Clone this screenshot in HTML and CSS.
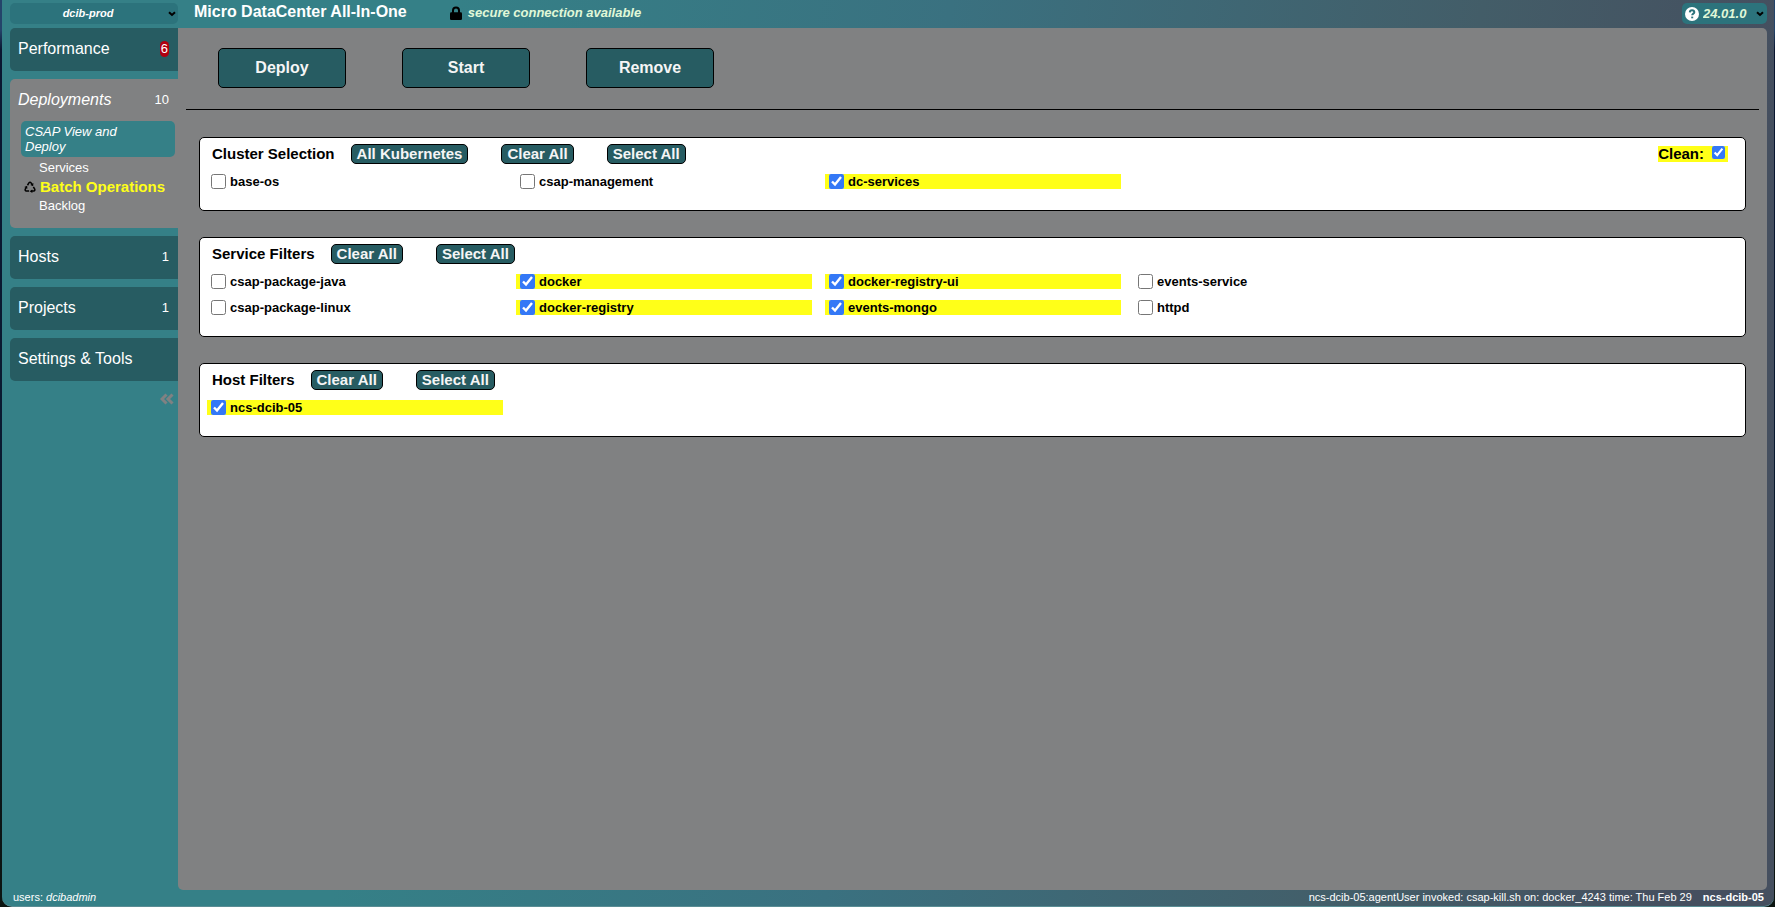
FILE: index.html
```html
<!DOCTYPE html>
<html lang="en">
<head>
<meta charset="utf-8">
<title>CSAP Batch Operations</title>
<link rel="stylesheet" href="styles.css">
</head>
<body>
<div class="app">
  <div class="workspace">
    <nav class="sidebar" aria-label="Main">
      <div class="picker picker-project">
        <select aria-label="Project"><option>dcib-prod</option></select>
        <svg class="chevron" viewBox="0 0 8 6"><path d="M1 1.2 4 4 7 1.2"/></svg>
      </div>
      <div class="tabs">
        <button class="tab" type="button">Performance <span class="count alert">6</span></button>
        <section class="tab-open">
          <button class="tab tab-active" type="button">Deployments <span class="count">10</span></button>
          <div class="submenu">
            <h2 class="submenu-title">CSAP View and Deploy</h2>
            <a class="sublink" href="#services">Services</a>
            <a class="sublink current" href="#batch">
              <svg class="recycle" viewBox="0 0 24 24"><g id="arm"><path d="M7 8.5 9.8 3.8Q12 1 14.2 3.8L16 6.8"/><path class="tip" d="M18.8 4 18.4 10.5 12.7 7.8z"/></g><use href="#arm" transform="rotate(120 12 13.4)"/><use href="#arm" transform="rotate(240 12 13.4)"/></svg>
              Batch Operations</a>
            <a class="sublink" href="#backlog">Backlog</a>
          </div>
        </section>
        <button class="tab" type="button">Hosts <span class="count">1</span></button>
        <button class="tab" type="button">Projects <span class="count">1</span></button>
        <button class="tab" type="button">Settings &amp; Tools</button>
      </div>
      <button class="collapse" type="button" aria-label="Collapse menu">
        <svg viewBox="0 0 14 12"><path d="M6.5 1.5 2 6l4.500 4.500M12.500 1.500 8 6l4.500 4.500"/></svg>
      </button>
    </nav>
    <div class="content">
      <header class="topbar">
        <h1>Micro DataCenter All-In-One</h1>
        <p class="secure">
          <svg class="lock" viewBox="0 0 12 14"><path d="M3 7V4.500a3 3 0 0 1 6 0V7"/><rect x="0" y="6.300" width="12" height="7.700" rx="1.300"/></svg>
          secure connection available
        </p>
        <div class="picker picker-version">
          <svg class="help" viewBox="0 0 14 14"><circle cx="7" cy="7" r="7"/><path d="M4.800 5.400C4.900 3.900 5.900 3.300 7 3.300c1.300 0 2.300.8 2.300 1.900C9.300 6.700 7.200 6.600 7.200 8.300"/><path d="M7.200 9.600v1.700"/></svg>
          <select aria-label="Version"><option>24.01.0</option></select>
          <svg class="chevron" viewBox="0 0 8 6"><path d="M1 1.200 4 4 7 1.200"/></svg>
        </div>
      </header>
      <main class="panel">
        <div class="actions">
          <button type="button">Deploy</button>
          <button type="button">Start</button>
          <button type="button">Remove</button>
        </div>
        <div class="cards">
          <section class="card">
            <div class="card-head">
              <h2>Cluster Selection</h2>
              <div class="card-buttons">
                <button type="button">All Kubernetes</button>
                <button type="button">Clear All</button>
                <button type="button">Select All</button>
              </div>
              <label class="clean">Clean: <input type="checkbox" checked></label>
            </div>
            <div class="options">
              <label><input type="checkbox">base-os</label>
              <label><input type="checkbox">csap-management</label>
              <label><input type="checkbox" checked>dc-services</label>
            </div>
          </section>
          <section class="card">
            <div class="card-head">
              <h2>Service Filters</h2>
              <div class="card-buttons">
                <button type="button">Clear All</button>
                <button type="button">Select All</button>
              </div>
            </div>
            <div class="options">
              <label><input type="checkbox">csap-package-java</label>
              <label><input type="checkbox" checked>docker</label>
              <label><input type="checkbox" checked>docker-registry-ui</label>
              <label><input type="checkbox">events-service</label>
              <label><input type="checkbox">csap-package-linux</label>
              <label><input type="checkbox" checked>docker-registry</label>
              <label><input type="checkbox" checked>events-mongo</label>
              <label><input type="checkbox">httpd</label>
            </div>
          </section>
          <section class="card">
            <div class="card-head">
              <h2>Host Filters</h2>
              <div class="card-buttons">
                <button type="button">Clear All</button>
                <button type="button">Select All</button>
              </div>
            </div>
            <div class="options">
              <label><input type="checkbox" checked>ncs-dcib-05</label>
            </div>
          </section>
        </div>
      </main>
    </div>
  </div>
  <footer class="status">
    <span>users: <em>dcibadmin</em></span>
    <span class="event">ncs-dcib-05:agentUser invoked: csap-kill.sh on: docker_4243 time: Thu Feb 29</span>
    <strong>ncs-dcib-05</strong>
  </footer>
</div>
</body>
</html>
```
FILE: styles.css
```css
* {
  box-sizing: border-box;
}

body {
  margin: 0;
  padding: 0 1px 0 2px;
  background: linear-gradient(#24446a 0, #24446a 30px, #0a1630 50px, #0a1a30 50%, #0c1410);
  font-family: "Liberation Sans", Arial, sans-serif;
  color: #fff;
}

h1,
h2,
p {
  margin: 0;
}

button,
select,
input {
  font: inherit;
  color: inherit;
  margin: 0;
}

button {
  border: 0;
  padding: 0;
}

.app {
  display: flex;
  flex-direction: column;
  min-height: 100vh;
  padding: 0 7px 0 8px;
  border-radius: 0 0 10px 10px;
  border-bottom: 1px solid #5a8d94;
  background: linear-gradient(98deg, #358087 24%, #3a7180 50%, #435d68 78%, #454f5f 94%);
}

.workspace {
  flex: 1;
  display: flex;
}

.sidebar {
  flex: none;
  width: 168px;
  padding-top: 3px;
}

.content {
  flex: 1;
  min-width: 0;
  display: flex;
  flex-direction: column;
}

.picker {
  position: relative;
  height: 21px;
  border-radius: 5px;
  background: #2c737c;
  font-weight: bold;
  font-style: italic;
}

.picker select {
  appearance: none;
  width: 100%;
  height: 100%;
  border: 0;
  background: none;
}

.picker-project {
  margin-bottom: 4px;
}

.picker-project select {
  padding: 0 12px 2px 0;
  font-size: 11px;
  text-align: center;
  text-align-last: center;
}

.picker-version {
  width: 85px;
  margin-left: auto;
  color: #e0f8d8;
}

.picker-version select {
  padding: 0 0 1px 21px;
  font-size: 13px;
}

.chevron {
  position: absolute;
  right: 2px;
  top: 8px;
  width: 8px;
  height: 6px;
  fill: none;
  stroke: #000;
  stroke-width: 2;
}

.picker-version .chevron {
  right: 3px;
}

.help {
  position: absolute;
  left: 3px;
  top: 4px;
  width: 14px;
  height: 14px;
  fill: #fff;
}

.help path {
  fill: none;
  stroke: #2c737c;
  stroke-width: 2;
}

.tabs {
  display: flex;
  flex-direction: column;
  gap: 8px;
}

.tab {
  display: flex;
  align-items: center;
  justify-content: space-between;
  width: 100%;
  height: 43px;
  padding: 0 9px 2px 8px;
  border-radius: 5px 0 0 5px;
  background: #275c62;
  font-size: 16px;
}

.count {
  font-size: 13px;
  font-style: normal;
  line-height: 16px;
}

.alert {
  padding: 0 1px;
  border-radius: 5px;
  background: #b00010;
}

.tab-open {
  padding-bottom: 13px;
  border-radius: 5px 0 0 5px;
  background: #808182;
}

.tab-active {
  height: 42px;
  padding-bottom: 0;
  background: none;
  font-style: italic;
}

.submenu {
  padding: 0 3px 0 11px;
}

.submenu-title {
  margin-bottom: 1px;
  padding: 3px 32px 3px 4px;
  border-radius: 5px;
  background: #358087;
  font-size: 13px;
  font-weight: normal;
  font-style: italic;
  line-height: 15px;
}

.sublink {
  display: flex;
  align-items: center;
  height: 19px;
  padding-left: 18px;
  color: #fff;
  font-size: 13px;
  text-decoration: none;
}

.current {
  gap: 4px;
  padding-left: 3px;
  color: #ffff18;
  font-size: 15px;
  font-weight: bold;
  white-space: nowrap;
}

.recycle {
  flex: none;
  width: 12px;
  height: 12px;
  fill: none;
  stroke: #000;
  stroke-width: 3;
}

.recycle .tip {
  fill: #000;
  stroke: none;
}

.collapse {
  display: block;
  margin: 12px 4px 0 auto;
  background: none;
}

.collapse svg {
  display: block;
  width: 14px;
  height: 12px;
  fill: none;
  stroke: #808182;
  stroke-width: 3;
}

.topbar {
  display: flex;
  height: 28px;
  padding-top: 3px;
}

.topbar h1 {
  padding-left: 16px;
  font-size: 16px;
  line-height: 17px;
}

.secure {
  display: flex;
  align-items: center;
  gap: 6px;
  height: 19px;
  margin-left: 43px;
  color: #e0f8d8;
  font-size: 13px;
  font-weight: bold;
  font-style: italic;
}

.lock {
  width: 12px;
  height: 14px;
}

.lock path {
  fill: none;
  stroke: #000;
  stroke-width: 2;
}

.panel {
  flex: 1;
  border-radius: 0 5px 5px 5px;
  background: #808182;
}

.actions {
  display: flex;
  gap: 56px;
  margin: 0 8px;
  padding: 20px 32px 21px;
  border-bottom: 1px solid #000;
}

.actions button {
  width: 128px;
  height: 40px;
  border: 1px solid #000;
  border-radius: 5px;
  background: #275c62;
  color: #f5f5f5;
  font-size: 16px;
  font-weight: bold;
}

.cards {
  display: flex;
  flex-direction: column;
  gap: 26px;
  padding: 27px 21px;
}

.card {
  padding: 6px 7px 21px;
  border: 1px solid #000;
  border-radius: 5px;
  background: #fff;
  color: #000;
  font-weight: bold;
}

.card-head {
  display: flex;
  align-items: center;
  gap: 16px;
  padding: 0 10px 0 5px;
}

.card-head h2 {
  font-size: 15px;
  line-height: 20px;
}

.card-buttons {
  display: flex;
  gap: 33px;
}

.card-buttons button {
  height: 20px;
  padding: 0 5px;
  border: 1px solid #000;
  border-radius: 5px;
  background: #275c62;
  color: #f5f5f5;
  font-size: 15px;
  font-weight: bold;
  line-height: 18px;
}

.clean {
  display: flex;
  gap: 8px;
  margin-left: auto;
  padding-right: 3px;
  background: #ffff18;
  font-size: 15px;
  line-height: 16px;
}

.clean input {
  width: 13px;
  height: 13px;
}

.options {
  display: grid;
  grid-template-columns: repeat(4, 296px);
  gap: 11px 13px;
  margin-top: 10px;
}

.options label {
  display: flex;
  align-items: center;
  gap: 4px;
  height: 15px;
  padding-left: 4px;
  font-size: 13px;
}

.options label:has(:checked) {
  background: #ffff18;
}

.options input {
  width: 15px;
  height: 15px;
}

input[type="checkbox"] {
  accent-color: #3478f6;
}

.status {
  display: flex;
  align-items: center;
  height: 16px;
  padding: 0 3px 1px;
  font-size: 11px;
  line-height: 15px;
}

.event {
  margin: 0 11px 0 auto;
}
```
